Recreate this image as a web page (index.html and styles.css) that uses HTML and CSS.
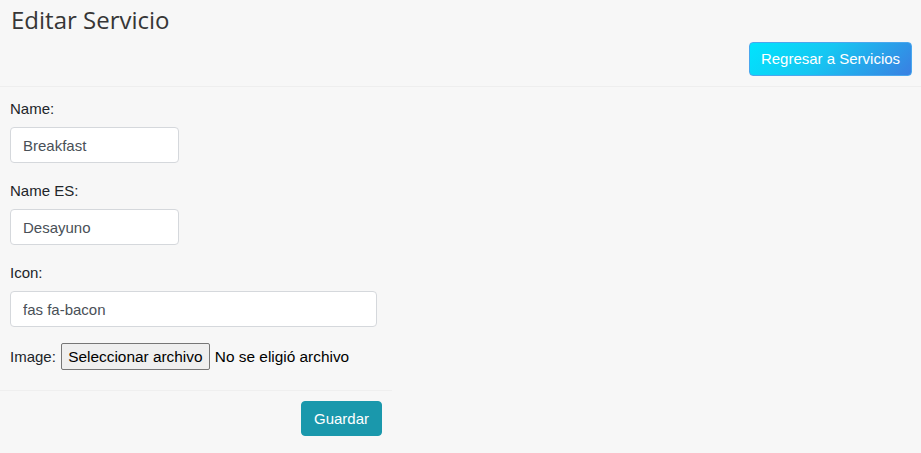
FILE: index.html
```html
<!DOCTYPE html>
<html lang="es">
<head>
<meta charset="utf-8">
<title>Editar Servicio</title>
<link rel="stylesheet" href="styles.css">
</head>
<body>
<header class="page-header">
  <h3 class="page-title">Editar Servicio</h3>
  <div class="header-actions">
    <a class="btn btn-gradient" href="#">Regresar a Servicios</a>
  </div>
</header>
<main class="content">
  <form class="edit-form">
    <div class="form-group">
      <label class="form-label">Name:</label>
      <input class="form-control short" type="text" value="Breakfast">
    </div>
    <div class="form-group">
      <label class="form-label">Name ES:</label>
      <input class="form-control short" type="text" value="Desayuno">
    </div>
    <div class="form-group">
      <label class="form-label">Icon:</label>
      <input class="form-control long" type="text" value="fas fa-bacon">
    </div>
    <div class="file-row">
      <span class="file-label">Image:</span>
      <span class="file-button">Seleccionar archivo</span>
      <span class="file-status">No se eligió archivo</span>
    </div>
    <div class="form-footer">
      <button class="btn btn-info" type="button">Guardar</button>
    </div>
  </form>
</main>
</body>
</html>
```

FILE: styles.css
```css
* { box-sizing: border-box; }

html, body {
  margin: 0;
  background: #f7f7f7;
}

body {
  font-family: "Liberation Sans", Arial, sans-serif;
  font-size: 15px;
  color: #212529;
}

.page-header {
  padding: 5px 9px 10px 10px;
  border-bottom: 1px solid #eeeeee;
}

.page-title {
  margin: 0;
  padding-left: 1px;
  font-family: "Open Sans", "Noto Sans", sans-serif;
  font-weight: 400;
  font-size: 24px;
  line-height: 29px;
  color: #363636;
}

.header-actions {
  display: flex;
  justify-content: flex-end;
  margin-top: 8px;
}

.btn {
  display: inline-block;
  font-family: "Liberation Sans", Arial, sans-serif;
  font-size: 15px;
  line-height: 22px;
  border-radius: 4px;
  text-decoration: none;
  color: #ffffff;
  border: 1px solid transparent;
}

.btn-gradient {
  width: 163px;
  height: 34px;
  padding: 5px 0;
  text-align: center;
  background: linear-gradient(135deg, #00e4fd 0%, #16c6f2 45%, #3a7fe2 100%);
  border-color: #4aa7ee;
}

.content {
  padding: 10px 10px 0 10px;
}

.edit-form {
  display: flex;
  flex-direction: column;
}

.form-group {
  display: flex;
  flex-direction: column;
  align-items: flex-start;
  margin-bottom: 16px;
}

.form-label {
  display: block;
  line-height: 24px;
  margin-bottom: 6px;
  color: #212529;
}

.form-control {
  height: 36px;
  padding: 6px 12px;
  font-family: "Liberation Sans", Arial, sans-serif;
  font-size: 15px;
  color: #495057;
  background: #ffffff;
  border: 1px solid #d5d8dc;
  border-radius: 4px;
  outline: none;
}

.form-control.short { width: 169px; }
.form-control.long { width: 367px; }

.file-row {
  display: flex;
  align-items: center;
  height: 27px;
}

.file-label { margin-right: 5px; }

.file-button {
  display: inline-flex;
  align-items: center;
  justify-content: center;
  width: 149px;
  height: 27px;
  background: #efefef;
  border: 1px solid #767676;
  border-radius: 2px;
  color: #000000;
  font-size: 15.4px;
}

.file-status {
  margin-left: 5px;
  color: #000000;
  font-size: 15.4px;
}

.form-footer {
  width: 392px;
  margin-top: 20px;
  margin-left: -10px;
  border-top: 1px solid #efefef;
  padding: 10px 10px 0 0;
  display: flex;
  justify-content: flex-end;
}

.btn-info {
  width: 81px;
  height: 35px;
  padding: 5px 0;
  background: #1a98ac;
  border-color: #1a98ac;
  cursor: pointer;
}
```
